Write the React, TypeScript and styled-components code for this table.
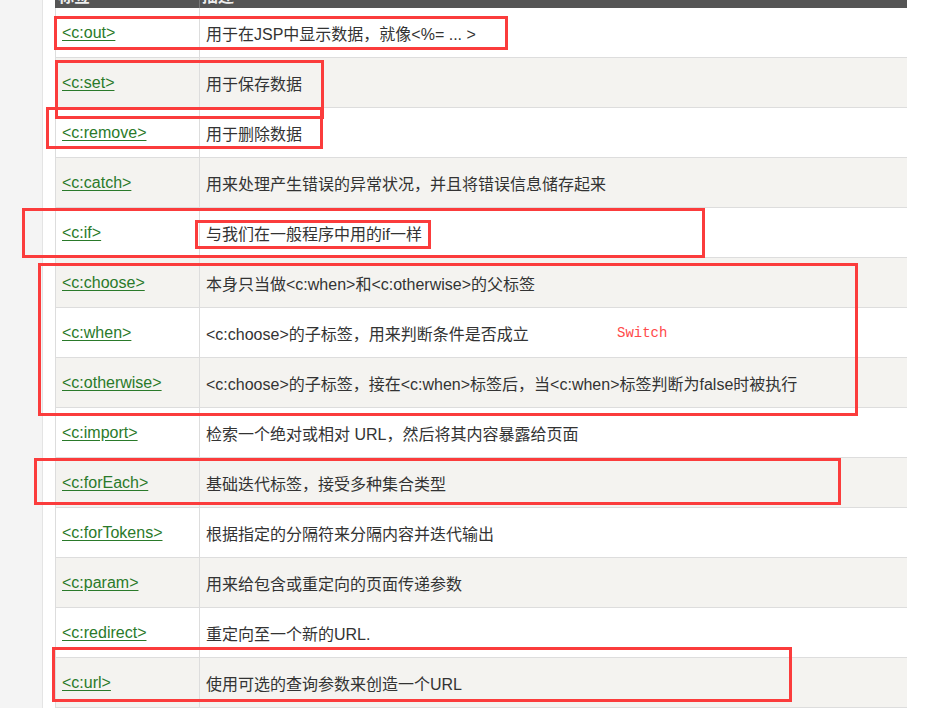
import React from "react";
import styled, { createGlobalStyle } from "styled-components";

const GlobalStyle = createGlobalStyle`
  html, body {
    margin: 0;
    padding: 0;
    background: #f4f4f4;
    overflow: hidden;
  }
  body {
    font-family: "Liberation Sans", "Noto Sans CJK SC", sans-serif;
  }
`;

const Page = styled.div`
  position: relative;
  width: 938px;
  height: 708px;
  overflow: hidden;
  background: #f4f4f4;
`;

const Content = styled.main`
  margin-left: 42px;
  height: 708px;
  background: #ffffff;
  border-left: 1px solid #e4e4e4;
  padding-left: 12px;
  box-sizing: border-box;
`;

const Table = styled.div`
  width: 852px;
  display: flex;
  flex-direction: column;
`;

const HeaderRow = styled.div`
  display: grid;
  grid-template-columns: 143px 708px;
  height: 8px;
  background: #555555;
  border-left: 1px solid #555555;
  overflow: hidden;
`;

const HeaderCell = styled.div<{ $divider?: boolean }>`
  height: 8px;
  overflow: hidden;
  padding-left: 2px;
  border-left: ${(p) => (p.$divider ? "1px solid #777" : "none")};
  span {
    display: block;
    margin-top: -13px;
    line-height: 20px;
    font-size: 16px;
    font-weight: bold;
    color: #eeeeee;
  }
`;

const Row = styled.div<{ $alt?: boolean }>`
  display: grid;
  grid-template-columns: 143px 708px;
  height: 50px;
  box-sizing: border-box;
  border-left: 1px solid #dddddd;
  border-bottom: 1px solid #dddddd;
  background: ${(p) => (p.$alt ? "#f4f3f0" : "#ffffff")};
`;

const Cell = styled.div<{ $divider?: boolean }>`
  display: flex;
  align-items: center;
  padding-left: 6px;
  font-size: 16px;
  color: #333333;
  white-space: nowrap;
  border-left: ${(p) => (p.$divider ? "1px solid #dddddd" : "none")};
`;

const TagLink = styled.a`
  color: #2a7a2a;
  text-decoration: underline;
  text-underline-offset: 2px;
  font-size: 16px;
`;

const Annotation = styled.div`
  position: absolute;
  box-sizing: border-box;
  border: 3px solid #fb3c3c;
  pointer-events: none;
`;

const Note = styled.div`
  position: absolute;
  font-family: "Liberation Mono", "DejaVu Sans Mono", monospace;
  font-size: 14px;
  line-height: 16px;
  color: #ff4a4a;
`;

const rows: [string, string][] = [
  ["<c:out>", "用于在JSP中显示数据，就像<%= ... >"],
  ["<c:set>", "用于保存数据"],
  ["<c:remove>", "用于删除数据"],
  ["<c:catch>", "用来处理产生错误的异常状况，并且将错误信息储存起来"],
  ["<c:if>", "与我们在一般程序中用的if一样"],
  ["<c:choose>", "本身只当做<c:when>和<c:otherwise>的父标签"],
  ["<c:when>", "<c:choose>的子标签，用来判断条件是否成立"],
  ["<c:otherwise>", "<c:choose>的子标签，接在<c:when>标签后，当<c:when>标签判断为false时被执行"],
  ["<c:import>", "检索一个绝对或相对 URL，然后将其内容暴露给页面"],
  ["<c:forEach>", "基础迭代标签，接受多种集合类型"],
  ["<c:forTokens>", "根据指定的分隔符来分隔内容并迭代输出"],
  ["<c:param>", "用来给包含或重定向的页面传递参数"],
  ["<c:redirect>", "重定向至一个新的URL."],
  ["<c:url>", "使用可选的查询参数来创造一个URL"],
];

const boxes = [
  { l: 54, t: 16, r: 508, b: 50 },
  { l: 55, t: 60, r: 324, b: 119 },
  { l: 46, t: 107, r: 323, b: 149 },
  { l: 22, t: 208, r: 705, b: 258 },
  { l: 195, t: 220, r: 431, b: 249 },
  { l: 38, t: 263, r: 858, b: 416 },
  { l: 34, t: 458, r: 841, b: 505 },
  { l: 52, t: 647, r: 792, b: 702 },
];

export default function App() {
  return (
    <>
      <GlobalStyle />
      <Page>
        <Content>
          <Table>
            <HeaderRow>
              <HeaderCell>
                <span>标签</span>
              </HeaderCell>
              <HeaderCell $divider>
                <span>描述</span>
              </HeaderCell>
            </HeaderRow>
            {rows.map(([tag, desc], i) => (
              <Row key={tag} $alt={i % 2 === 1}>
                <Cell>
                  <TagLink href="#">{tag}</TagLink>
                </Cell>
                <Cell $divider>{desc}</Cell>
              </Row>
            ))}
          </Table>
        </Content>
        {boxes.map((b, i) => (
          <Annotation
            key={i}
            style={{ left: b.l, top: b.t, width: b.r - b.l, height: b.b - b.t }}
          />
        ))}
        <Note style={{ left: 617, top: 325 }}>Switch</Note>
      </Page>
    </>
  );
}
